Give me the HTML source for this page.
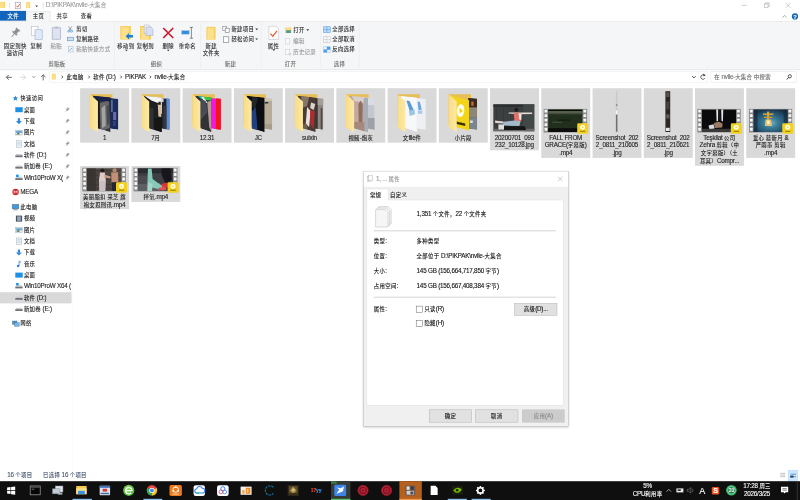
<!DOCTYPE html>
<html lang="zh-CN"><head><meta charset="utf-8"><title>nvile-大集合</title>
<style>
html,body{margin:0;padding:0;width:800px;height:500px;overflow:hidden;background:#fff}
#r{position:absolute;left:0;top:0;width:1600px;height:1000px;transform:scale(.5);transform-origin:0 0;overflow:hidden;background:#fff;font-family:"Liberation Sans","Noto Sans CJK SC",sans-serif}
#r div{position:absolute;box-sizing:border-box}
#w{left:-40px;top:-40px;width:1680px;height:1080px;background:#fff;filter:blur(0.6px)}
#c{left:40px;top:40px;width:1600px;height:1000px}
#r .t{white-space:pre;-webkit-text-stroke:0.22px}
#r .k{font-size:94%;letter-spacing:0.064em}
#r .l{font-size:110%;letter-spacing:-0.033em}
#r svg{position:absolute;left:0;top:0;overflow:visible}
</style></head><body><div id="r"><div id="w"><div id="c">
<svg width="1600" height="1000" viewBox="0 0 800 500">
<rect x="-20.00" y="-20.00" width="840.00" height="540.00" fill="#ffffff" />
<rect x="-1.00" y="1.90" width="6.00" height="6.00" fill="#f7d063" />
<polygon points="-0.28,2.50 3.80,2.50 3.80,7.90 -0.28,7.90" fill="#fce08c" />
<line x1="9.60" y1="2.50" x2="9.60" y2="8.50" stroke="#c8c8c8" stroke-width="0.5" />
<rect x="15.20" y="2.40" width="5.20" height="6.40" fill="#ffffff" stroke="#8a8a8a" stroke-width="0.5"/>
<path d="M16.4 5.8 L17.6 7.2 L19.6 4.2" fill="none" stroke="#d8572f" stroke-width="0.9" />
<rect x="26.20" y="2.20" width="4.00" height="5.80" fill="#f7d063" />
<polygon points="26.68,2.78 29.40,2.78 29.40,8.00 26.68,8.00" fill="#fce08c" />
<polygon points="35.30,5.60 38.10,5.60 36.70,7.20" fill="#444" />
<line x1="43.20" y1="2.50" x2="43.20" y2="8.50" stroke="#c8c8c8" stroke-width="0.5" />
<line x1="741.80" y1="5.40" x2="746.60" y2="5.40" stroke="#9a9a9a" stroke-width="0.5" />
<rect x="764.40" y="3.90" width="3.60" height="3.60" fill="none" stroke="#9a9a9a" stroke-width="0.5"/>
<path d="M765.6 3.9 V2.9 H769.2 V6.5 H768" fill="none" stroke="#9a9a9a" stroke-width="0.5" />
<path d="M785.8 3 L790.6 7.8 M790.6 3 L785.8 7.8" fill="none" stroke="#9a9a9a" stroke-width="0.5" />
<rect x="-10.00" y="10.90" width="36.00" height="9.80" fill="#1265bd" />
<rect x="-10.00" y="21.40" width="820.00" height="48.20" fill="#f5f6f7" />
<line x1="-10.00" y1="21.40" x2="810.00" y2="21.40" stroke="#dadbdc" stroke-width="0.5" />
<line x1="-10.00" y1="69.70" x2="810.00" y2="69.70" stroke="#dadbdc" stroke-width="0.6" />
<rect x="26.90" y="11.20" width="23.20" height="10.60" fill="#f5f6f7" stroke="#dadbdc" stroke-width="0.5"/>
<rect x="27.20" y="21.00" width="22.60" height="1.00" fill="#f5f6f7" />
<path d="M782.4 17.6 L784.6 15.4 L786.8 17.6" fill="none" stroke="#777" stroke-width="0.6" />
<circle cx="795.00" cy="16.40" r="3.10" fill="#1464b4" />
<line x1="114.30" y1="23.50" x2="114.30" y2="67.50" stroke="#e9eaec" stroke-width="0.6" />
<line x1="200.60" y1="23.50" x2="200.60" y2="67.50" stroke="#e9eaec" stroke-width="0.6" />
<line x1="261.30" y1="23.50" x2="261.30" y2="67.50" stroke="#e9eaec" stroke-width="0.6" />
<line x1="320.40" y1="23.50" x2="320.40" y2="67.50" stroke="#e9eaec" stroke-width="0.6" />
<line x1="359.20" y1="23.50" x2="359.20" y2="67.50" stroke="#e9eaec" stroke-width="0.6" />
<g transform="translate(15.20 32.80) scale(1.150) rotate(40)">
<rect x="-2.20" y="-4.20" width="4.40" height="1.20" fill="#8a8d91" />
<rect x="-1.50" y="-3.20" width="3.00" height="3.20" fill="#8a8d91" />
<polygon points="-3.00,0.00 3.00,0.00 2.20,1.20 -2.20,1.20" fill="#8a8d91" />
<rect x="-0.35" y="1.20" width="0.70" height="3.60" fill="#8a8d91" />
</g>
<rect x="31.60" y="26.60" width="6.40" height="9.00" fill="#fdfdfd" stroke="#a9b4c4" stroke-width="0.5"/>
<rect x="35.00" y="29.80" width="7.20" height="9.60" fill="#dfe9f7" stroke="#8fa5c4" stroke-width="0.5"/>
<rect x="52.20" y="27.80" width="8.40" height="11.40" fill="#dfe3ee" stroke="#9aa3b8" stroke-width="0.6"/>
<rect x="54.60" y="26.60" width="3.60" height="2.00" fill="#b9bfcc" />
<path d="M68.6 26.4 L71.2 30.4 M71.8 26.4 L69.2 30.4" fill="none" stroke="#5d6d85" stroke-width="0.6" />
<circle cx="68.80" cy="31.20" r="1.00" fill="none" stroke="#2b7fd0" stroke-width="0.6"/>
<circle cx="71.60" cy="31.20" r="1.00" fill="none" stroke="#2b7fd0" stroke-width="0.6"/>
<rect x="67.60" y="37.20" width="6.00" height="3.60" fill="#cfe0f4" stroke="#4b82c3" stroke-width="0.5"/>
<rect x="68.40" y="46.20" width="4.60" height="5.80" fill="#f4f7fb" stroke="#9fb0c9" stroke-width="0.5"/>
<path d="M69.6 50.6 L71.8 48.2" fill="none" stroke="#3f7fd0" stroke-width="0.7" />
<rect x="120.30" y="26.00" width="10.60" height="13.50" fill="#f7d063" />
<polygon points="121.57,27.35 128.78,27.35 128.78,39.50 121.57,39.50" fill="#fce08c" />
<polygon points="125.70,36.20 129.00,33.00 129.00,34.90 133.00,34.90 133.00,37.50 129.00,37.50 129.00,39.40" fill="#1b7fd0" />
<polygon points="125.00,49.70 127.80,49.70 126.40,51.30" fill="#333" />
<rect x="140.00" y="26.00" width="11.00" height="13.50" fill="#f7d063" />
<polygon points="141.32,27.35 148.80,27.35 148.80,39.50 141.32,39.50" fill="#fce08c" />
<path d="M144.3 25.0 H149.0 L151.0 27.0 V33.5 H144.3 Z" fill="#f4f5fb" stroke="#a3a8b6" stroke-width="0.45" />
<path d="M146.0 27.0 H150.8 L153.0 29.2 V35.5 H146.0 Z" fill="#d9dff3" stroke="#9aa0b2" stroke-width="0.45" />
<polygon points="144.20,49.70 147.00,49.70 145.60,51.30" fill="#333" />
<path d="M163.2 28 L173.2 38 M173.2 28 L163.2 38" fill="none" stroke="#cf1a2e" stroke-width="1.7" />
<polygon points="166.90,49.70 169.70,49.70 168.30,51.30" fill="#333" />
<rect x="181.60" y="30.60" width="7.60" height="3.60" fill="#2f8ee0" stroke="#b9c6d8" stroke-width="0.5"/>
<path d="M191.4 27.4 V38.2 M189.8 27.4 H193 M189.8 38.2 H193" fill="none" stroke="#444" stroke-width="0.6" />
<rect x="206.40" y="26.80" width="9.20" height="12.80" fill="#f7d063" />
<polygon points="207.50,28.08 213.76,28.08 213.76,39.60 207.50,39.60" fill="#fce08c" />
<rect x="222.80" y="26.40" width="3.60" height="4.00" fill="#fdfdfd" stroke="#6a7078" stroke-width="0.55"/>
<rect x="225.20" y="28.20" width="4.00" height="4.40" fill="#fdfdfd" stroke="#6a7078" stroke-width="0.55"/>
<polygon points="255.30,28.60 258.10,28.60 256.70,30.20" fill="#333" />
<rect x="223.40" y="36.80" width="5.40" height="5.60" fill="#fdfdfd" stroke="#6a7078" stroke-width="0.55"/>
<polygon points="255.30,38.40 258.10,38.40 256.70,40.00" fill="#333" />
<path d="M268.8 26.4 H276.2 L278.6 28.8 V39.5 H268.8 Z" fill="#fdfdfd" stroke="#bdbdbd" stroke-width="0.5" />
<path d="M270.4 33.6 L272.8 36.2 L277.0 30.8" fill="none" stroke="#d9603a" stroke-width="1.2" />
<polygon points="272.40,49.30 275.20,49.30 273.80,50.90" fill="#333" />
<rect x="285.20" y="27.60" width="6.00" height="5.40" fill="#f7d063" />
<polygon points="285.92,28.14 290.00,28.14 290.00,33.00 285.92,33.00" fill="#fce08c" />
<rect x="286.20" y="30.20" width="4.60" height="2.80" fill="#4a9a8a" />
<polygon points="306.30,29.30 309.10,29.30 307.70,30.90" fill="#333" />
<rect x="285.60" y="38.80" width="4.20" height="5.20" fill="#fafafa" stroke="#c2c6cc" stroke-width="0.45"/>
<rect x="285.60" y="49.60" width="4.20" height="5.20" fill="#fafafa" stroke="#c2c6cc" stroke-width="0.45"/>
<circle cx="289.80" cy="54.00" r="1.50" fill="#d4d6da" />
<rect x="323.60" y="26.80" width="6.60" height="5.60" fill="#bfdcf8" stroke="#3f93e6" stroke-width="0.5"/>
<line x1="326.90" y1="26.80" x2="326.90" y2="32.40" stroke="#3f93e6" stroke-width="0.5" />
<line x1="323.60" y1="29.60" x2="330.20" y2="29.60" stroke="#3f93e6" stroke-width="0.5" />
<rect x="323.60" y="36.80" width="6.60" height="5.60" fill="#f8f8f8" stroke="#b8bcc2" stroke-width="0.5"/>
<line x1="326.90" y1="36.80" x2="326.90" y2="42.40" stroke="#b8bcc2" stroke-width="0.5" />
<line x1="323.60" y1="39.60" x2="330.20" y2="39.60" stroke="#b8bcc2" stroke-width="0.5" />
<rect x="323.60" y="46.80" width="6.60" height="5.60" fill="#f2f7fc" stroke="#8fbfee" stroke-width="0.5"/>
<line x1="326.90" y1="46.80" x2="326.90" y2="52.40" stroke="#8fbfee" stroke-width="0.5" />
<line x1="323.60" y1="49.60" x2="330.20" y2="49.60" stroke="#8fbfee" stroke-width="0.5" />
<rect x="323.60" y="49.60" width="3.30" height="2.80" fill="#4a9ae6" />
<rect x="326.90" y="46.80" width="3.30" height="2.80" fill="#4a9ae6" />
<path d="M11.8 77.3 H6.4 M8.8 74.9 L6.4 77.3 L8.8 79.7" fill="none" stroke="#4a4a4a" stroke-width="0.85" />
<path d="M20.4 77.3 H25.6 M23.2 74.9 L25.6 77.3 L23.2 79.7" fill="none" stroke="#cfcfcf" stroke-width="0.8" />
<path d="M32.5 76.3 L33.8 77.6 L35.1 76.3" fill="none" stroke="#666" stroke-width="0.8" />
<path d="M43.2 80.4 V74.8 M40.9 77.1 L43.2 74.8 L45.5 77.1" fill="none" stroke="#4a4a4a" stroke-width="0.8" />
<rect x="49.80" y="71.60" width="657.60" height="10.60" fill="#ffffff" stroke="#e9e9e9" stroke-width="0.5"/>
<rect x="51.80" y="73.70" width="3.90" height="5.70" fill="#f7d063" />
<polygon points="52.27,74.27 54.92,74.27 54.92,79.40 52.27,79.40" fill="#fce08c" />
<path d="M61.50 75.6 L62.90 77 L61.50 78.4" fill="none" stroke="#444" stroke-width="0.85" />
<path d="M88.30 75.6 L89.70 77 L88.30 78.4" fill="none" stroke="#444" stroke-width="0.85" />
<path d="M120.30 75.6 L121.70 77 L120.30 78.4" fill="none" stroke="#444" stroke-width="0.85" />
<path d="M149.70 75.6 L151.10 77 L149.70 78.4" fill="none" stroke="#444" stroke-width="0.85" />
<path d="M692.2 76.2 L693.9 77.9 L695.6 76.2" fill="none" stroke="#333" stroke-width="0.95" />
<line x1="698.40" y1="71.60" x2="698.40" y2="82.20" stroke="#ececec" stroke-width="0.5" />
<path d="M704.4 75.3 A2.2 2.2 0 1 0 704.8 78.3" fill="none" stroke="#444" stroke-width="0.85" />
<polygon points="703.20,73.60 705.80,75.20 703.40,76.60" fill="#444" />
<rect x="710.80" y="71.60" width="85.40" height="10.60" fill="#ffffff" stroke="#e3e3e3" stroke-width="0.5"/>
<circle cx="789.80" cy="76.30" r="1.60" fill="none" stroke="#333" stroke-width="0.8"/>
<line x1="788.60" y1="77.50" x2="786.80" y2="79.50" stroke="#333" stroke-width="0.95" />
<rect x="-10.00" y="292.20" width="81.60" height="11.20" fill="#d9d9d9" />
<polygon points="15.40,95.40 16.16,97.35 18.25,97.47 16.64,98.80 17.16,100.83 15.40,99.70 13.64,100.83 14.16,98.80 12.55,97.47 14.64,97.35" fill="#2f8be0" />
<rect x="15.30" y="107.20" width="7.40" height="5.00" fill="#1e90e8" />
<g transform="translate(67.20 109.80) scale(0.550) rotate(40)">
<rect x="-2.20" y="-4.20" width="4.40" height="1.20" fill="#8a8d91" />
<rect x="-1.50" y="-3.20" width="3.00" height="3.20" fill="#8a8d91" />
<polygon points="-3.00,0.00 3.00,0.00 2.20,1.20 -2.20,1.20" fill="#8a8d91" />
<rect x="-0.35" y="1.20" width="0.70" height="3.60" fill="#8a8d91" />
</g>
<rect x="17.80" y="118.20" width="2.20" height="3.00" fill="#2f86d8" />
<polygon points="15.90,121.00 21.90,121.00 18.90,124.20" fill="#2f86d8" />
<g transform="translate(67.20 121.20) scale(0.550) rotate(40)">
<rect x="-2.20" y="-4.20" width="4.40" height="1.20" fill="#8a8d91" />
<rect x="-1.50" y="-3.20" width="3.00" height="3.20" fill="#8a8d91" />
<polygon points="-3.00,0.00 3.00,0.00 2.20,1.20 -2.20,1.20" fill="#8a8d91" />
<rect x="-0.35" y="1.20" width="0.70" height="3.60" fill="#8a8d91" />
</g>
<rect x="15.50" y="130.20" width="7.00" height="4.80" fill="#eef3f8" stroke="#9aa6b4" stroke-width="0.45"/>
<rect x="16.10" y="130.80" width="5.80" height="2.20" fill="#6aa9dc" />
<polygon points="16.10,134.40 18.30,132.20 20.10,134.40" fill="#5a7a4e" />
<g transform="translate(67.20 132.60) scale(0.550) rotate(40)">
<rect x="-2.20" y="-4.20" width="4.40" height="1.20" fill="#8a8d91" />
<rect x="-1.50" y="-3.20" width="3.00" height="3.20" fill="#8a8d91" />
<polygon points="-3.00,0.00 3.00,0.00 2.20,1.20 -2.20,1.20" fill="#8a8d91" />
<rect x="-0.35" y="1.20" width="0.70" height="3.60" fill="#8a8d91" />
</g>
<rect x="16.50" y="140.80" width="5.00" height="6.40" fill="#f7f9fb" stroke="#98a4b3" stroke-width="0.45"/>
<line x1="17.50" y1="142.40" x2="20.50" y2="142.40" stroke="#7fa6d0" stroke-width="0.45" />
<line x1="17.50" y1="143.80" x2="20.50" y2="143.80" stroke="#7fa6d0" stroke-width="0.45" />
<line x1="17.50" y1="145.20" x2="20.50" y2="145.20" stroke="#7fa6d0" stroke-width="0.45" />
<g transform="translate(67.20 144.00) scale(0.550) rotate(40)">
<rect x="-2.20" y="-4.20" width="4.40" height="1.20" fill="#8a8d91" />
<rect x="-1.50" y="-3.20" width="3.00" height="3.20" fill="#8a8d91" />
<polygon points="-3.00,0.00 3.00,0.00 2.20,1.20 -2.20,1.20" fill="#8a8d91" />
<rect x="-0.35" y="1.20" width="0.70" height="3.60" fill="#8a8d91" />
</g>
<polygon points="15.30,155.40 16.50,154.00 21.50,154.00 22.70,155.40" fill="#c9ccd0" />
<rect x="15.30" y="155.40" width="7.40" height="1.80" fill="#6e7378" />
<g transform="translate(67.20 155.20) scale(0.550) rotate(40)">
<rect x="-2.20" y="-4.20" width="4.40" height="1.20" fill="#8a8d91" />
<rect x="-1.50" y="-3.20" width="3.00" height="3.20" fill="#8a8d91" />
<polygon points="-3.00,0.00 3.00,0.00 2.20,1.20 -2.20,1.20" fill="#8a8d91" />
<rect x="-0.35" y="1.20" width="0.70" height="3.60" fill="#8a8d91" />
</g>
<polygon points="15.30,166.80 16.50,165.40 21.50,165.40 22.70,166.80" fill="#c9ccd0" />
<rect x="15.30" y="166.80" width="7.40" height="1.80" fill="#6e7378" />
<g transform="translate(67.20 166.60) scale(0.550) rotate(40)">
<rect x="-2.20" y="-4.20" width="4.40" height="1.20" fill="#8a8d91" />
<rect x="-1.50" y="-3.20" width="3.00" height="3.20" fill="#8a8d91" />
<polygon points="-3.00,0.00 3.00,0.00 2.20,1.20 -2.20,1.20" fill="#8a8d91" />
<rect x="-0.35" y="1.20" width="0.70" height="3.60" fill="#8a8d91" />
</g>
<polygon points="15.30,178.20 16.50,176.80 21.50,176.80 22.70,178.20" fill="#c9ccd0" />
<rect x="15.30" y="178.20" width="7.40" height="1.80" fill="#6e7378" />
<rect x="16.10" y="174.60" width="2.60" height="2.40" fill="#1e90e8" />
<g transform="translate(67.20 178.00) scale(0.550) rotate(40)">
<rect x="-2.20" y="-4.20" width="4.40" height="1.20" fill="#8a8d91" />
<rect x="-1.50" y="-3.20" width="3.00" height="3.20" fill="#8a8d91" />
<polygon points="-3.00,0.00 3.00,0.00 2.20,1.20 -2.20,1.20" fill="#8a8d91" />
<rect x="-0.35" y="1.20" width="0.70" height="3.60" fill="#8a8d91" />
</g>
<circle cx="15.60" cy="192.00" r="3.20" fill="#d9272e" />
<path d="M14.20 193.30 V190.80 L15.60 192.30 L17.00 190.80 V193.30" fill="none" stroke="#fff" stroke-width="0.7" />
<rect x="12.20" y="204.40" width="6.60" height="4.40" fill="#3a9be6" stroke="#5f6b78" stroke-width="0.5"/>
<rect x="13.40" y="209.40" width="4.20" height="0.80" fill="#5f6b78" />
<rect x="15.90" y="215.60" width="6.20" height="6.00" fill="#4a5058" />
<rect x="17.10" y="216.40" width="3.80" height="4.40" fill="#8fa7c0" />
<rect x="15.50" y="227.60" width="7.00" height="4.80" fill="#eef3f8" stroke="#9aa6b4" stroke-width="0.45"/>
<rect x="16.10" y="228.20" width="5.80" height="2.20" fill="#6aa9dc" />
<polygon points="16.10,231.80 18.30,229.60 20.10,231.80" fill="#5a7a4e" />
<rect x="16.50" y="238.00" width="5.00" height="6.40" fill="#f7f9fb" stroke="#98a4b3" stroke-width="0.45"/>
<line x1="17.50" y1="239.60" x2="20.50" y2="239.60" stroke="#7fa6d0" stroke-width="0.45" />
<line x1="17.50" y1="241.00" x2="20.50" y2="241.00" stroke="#7fa6d0" stroke-width="0.45" />
<line x1="17.50" y1="242.40" x2="20.50" y2="242.40" stroke="#7fa6d0" stroke-width="0.45" />
<rect x="17.80" y="249.60" width="2.20" height="3.00" fill="#2f86d8" />
<polygon points="15.90,252.40 21.90,252.40 18.90,255.60" fill="#2f86d8" />
<path d="M19.10 266.00 V261.00 L21.30 262.60" fill="none" stroke="#2f86d8" stroke-width="0.8" />
<circle cx="18.10" cy="266.00" r="1.30" fill="#2f86d8" />
<rect x="15.30" y="272.60" width="7.40" height="5.00" fill="#1e90e8" />
<polygon points="15.30,286.60 16.50,285.20 21.50,285.20 22.70,286.60" fill="#c9ccd0" />
<rect x="15.30" y="286.60" width="7.40" height="1.80" fill="#6e7378" />
<rect x="16.10" y="283.00" width="2.60" height="2.40" fill="#1e90e8" />
<polygon points="15.30,298.00 16.50,296.60 21.50,296.60 22.70,298.00" fill="#c9ccd0" />
<rect x="15.30" y="298.00" width="7.40" height="1.80" fill="#6e7378" />
<polygon points="15.30,309.20 16.50,307.80 21.50,307.80 22.70,309.20" fill="#c9ccd0" />
<rect x="15.30" y="309.20" width="7.40" height="1.80" fill="#6e7378" />
<rect x="12.40" y="321.00" width="4.60" height="3.40" fill="#3a9be6" stroke="#5f6b78" stroke-width="0.4"/>
<rect x="14.60" y="322.80" width="4.60" height="3.40" fill="#6fb6ee" stroke="#5f6b78" stroke-width="0.4"/>
<line x1="72.40" y1="84.00" x2="72.40" y2="470.00" stroke="#f4f4f4" stroke-width="0.5" />
<rect x="780.40" y="472.90" width="1.20" height="0.90" fill="#9a9a9a" />
<rect x="782.20" y="472.90" width="3.00" height="0.90" fill="#b9b9b9" />
<rect x="780.40" y="474.60" width="1.20" height="0.90" fill="#9a9a9a" />
<rect x="782.20" y="474.60" width="3.00" height="0.90" fill="#b9b9b9" />
<rect x="780.40" y="476.30" width="1.20" height="0.90" fill="#9a9a9a" />
<rect x="782.20" y="476.30" width="3.00" height="0.90" fill="#b9b9b9" />
<rect x="788.20" y="470.40" width="9.60" height="10.80" fill="#cce8ff" stroke="#a6d4fb" stroke-width="0.5"/>
<line x1="790.60" y1="474.20" x2="796.00" y2="474.20" stroke="#3f7fd4" stroke-width="0.8" />
<rect x="790.20" y="475.60" width="3.40" height="2.00" fill="#2c3d55" />
<line x1="793.60" y1="476.60" x2="796.00" y2="476.60" stroke="#5a7aa6" stroke-width="0.7" />
<filter id="bl" x="-20%" y="-20%" width="140%" height="140%"><feGaussianBlur stdDeviation="0.45"/></filter>
<filter id="bl2" x="-20%" y="-20%" width="140%" height="140%"><feGaussianBlur stdDeviation="0.7"/></filter>
<rect x="80.15" y="88.20" width="48.90" height="54.50" fill="#d9d9d9" />
<rect x="89.85" y="94.20" width="22.50" height="30.00" fill="#e8bf55" />
<clipPath id="c1"><polygon points="109.75,98.00 118.35,98.80 118.35,129.80 109.75,128.60"/></clipPath>
<g clip-path="url(#c1)">
<polygon points="109.75,98.00 118.35,98.80 118.35,129.80 109.75,128.60" fill="#182c60" />
<g filter="url(#bl)">
<rect x="113.15" y="112.00" width="3.00" height="8.00" fill="#7068a4" />
<rect x="111.55" y="100.00" width="0.80" height="12.00" fill="#a9b8dc" />
<rect x="113.15" y="121.00" width="2.40" height="5.00" fill="#3f3f78" />
</g>
</g>
<clipPath id="c2"><polygon points="92.75,95.70 110.55,97.60 110.55,132.20 97.75,128.20"/></clipPath>
<g clip-path="url(#c2)">
<polygon points="92.75,95.70 110.55,97.60 110.55,132.20 97.75,128.20" fill="#33353b" />
<g filter="url(#bl)">
<polygon points="99.75,103.00 108.75,100.60 109.75,128.00 100.55,131.00" fill="#67686b" />
<polygon points="101.55,108.00 105.15,105.00 105.75,126.00 102.15,128.00" fill="#a3a3a4" />
<polygon points="106.55,106.00 108.75,105.00 109.15,124.00 107.15,125.00" fill="#4a4a4e" />
<rect x="96.15" y="96.00" width="3.60" height="37.00" fill="#1a1b1f" />
<polygon points="92.15,95.00 111.15,96.60 111.15,101.40 98.15,100.40" fill="#14224a" />
</g>
</g>
<linearGradient id="fg2" x1="0" x2="1" y1="0" y2="0"><stop offset="0" stop-color="#f8dc86"/><stop offset="1" stop-color="#fde9a6"/></linearGradient>
<polygon points="89.95,94.20 97.95,101.40 97.95,132.00 89.85,127.60" fill="url(#fg2)" />
<rect x="131.39" y="88.20" width="48.90" height="54.50" fill="#d9d9d9" />
<rect x="141.09" y="94.20" width="22.50" height="30.00" fill="#e8bf55" />
<clipPath id="c3"><polygon points="160.99,98.00 169.59,98.80 169.59,129.80 160.99,128.60"/></clipPath>
<g clip-path="url(#c3)">
<polygon points="160.99,98.00 169.59,98.80 169.59,129.80 160.99,128.60" fill="#23262d" />
<g filter="url(#bl)">
<rect x="166.39" y="97.00" width="3.40" height="34.00" fill="#5b8dd6" />
<rect x="160.99" y="97.00" width="2.60" height="5.00" fill="#cfd3d8" />
<rect x="163.39" y="106.00" width="3.00" height="25.00" fill="#34373f" />
</g>
</g>
<clipPath id="c4"><polygon points="143.99,95.70 161.79,97.60 161.79,132.20 148.99,128.20"/></clipPath>
<g clip-path="url(#c4)">
<polygon points="143.99,95.70 161.79,97.60 161.79,132.20 148.99,128.20" fill="#1e1f23" />
<g filter="url(#bl)">
<polygon points="143.39,95.00 162.39,96.50 162.39,114.00 160.19,113.60 159.19,103.40 151.39,100.60" fill="#f4f4f4" />
<polygon points="157.79,104.50 160.79,104.00 161.39,117.00 158.39,116.60" fill="#d9bfa4" />
<rect x="158.39" y="101.80" width="2.40" height="3.00" fill="#2a1c18" />
<rect x="149.39" y="108.00" width="4.00" height="24.00" fill="#2f3034" />
<rect x="154.39" y="118.00" width="7.40" height="14.00" fill="#141416" />
</g>
</g>
<linearGradient id="fg4" x1="0" x2="1" y1="0" y2="0"><stop offset="0" stop-color="#f8dc86"/><stop offset="1" stop-color="#fde9a6"/></linearGradient>
<polygon points="141.19,94.20 149.19,101.40 149.19,132.00 141.09,127.60" fill="url(#fg4)" />
<rect x="182.63" y="88.20" width="48.90" height="54.50" fill="#d9d9d9" />
<rect x="192.33" y="94.20" width="22.50" height="30.00" fill="#e8bf55" />
<clipPath id="c5"><polygon points="210.63,98.00 220.83,98.80 220.83,129.80 210.63,128.60"/></clipPath>
<g clip-path="url(#c5)">
<polygon points="210.63,98.00 220.83,98.80 220.83,129.80 210.63,128.60" fill="#f018e0" />
<g filter="url(#bl)">
<rect x="215.93" y="97.00" width="6.00" height="35.00" fill="#f1121f" />
</g>
</g>
<clipPath id="c6"><polygon points="195.23,95.70 211.43,97.60 211.43,132.20 200.23,128.20"/></clipPath>
<g clip-path="url(#c6)">
<polygon points="195.23,95.70 211.43,97.60 211.43,132.20 200.23,128.20" fill="#303236" />
<g filter="url(#bl)">
<polygon points="197.63,95.00 203.03,96.00 205.13,100.00 200.63,98.50" fill="#19c4c0" />
<polygon points="203.03,96.00 211.63,97.00 211.63,100.40 205.13,100.00" fill="#35c83c" />
<polygon points="201.23,96.60 203.63,97.00 207.63,103.00 204.63,102.40" fill="#e8eef0" />
<polygon points="207.23,102.00 211.23,100.40 211.63,132.00 209.23,127.00" fill="#b59c8e" />
<polygon points="200.63,99.00 205.63,101.00 207.63,112.00 200.63,120.00" fill="#464e56" />
</g>
</g>
<linearGradient id="fg6" x1="0" x2="1" y1="0" y2="0"><stop offset="0" stop-color="#f8dc86"/><stop offset="1" stop-color="#fde9a6"/></linearGradient>
<polygon points="192.43,94.20 200.43,101.40 200.43,132.00 192.33,127.60" fill="url(#fg6)" />
<rect x="233.87" y="88.20" width="48.90" height="54.50" fill="#d9d9d9" />
<rect x="243.57" y="94.20" width="22.50" height="30.00" fill="#e8bf55" />
<clipPath id="c7"><polygon points="263.87,98.00 272.07,98.80 272.07,129.80 263.87,128.60"/></clipPath>
<g clip-path="url(#c7)">
<polygon points="263.87,98.00 272.07,98.80 272.07,129.80 263.87,128.60" fill="#b7ac97" />
<g filter="url(#bl)">
<rect x="264.67" y="102.00" width="3.60" height="1.50" fill="#2f3a34" />
<rect x="263.87" y="98.00" width="9.00" height="3.00" fill="#cdc4b2" />
<rect x="263.87" y="124.00" width="9.00" height="6.00" fill="#a89d88" />
</g>
</g>
<clipPath id="c8"><polygon points="246.47,95.70 264.67,97.60 264.67,132.20 251.47,128.20"/></clipPath>
<g clip-path="url(#c8)">
<polygon points="246.47,95.70 264.67,97.60 264.67,132.20 251.47,128.20" fill="#0d0e13" />
<g filter="url(#bl)">
<polygon points="251.87,112.00 255.47,106.00 257.47,129.00 251.87,132.00" fill="#23407f" />
<polygon points="251.87,97.00 257.87,98.00 255.87,106.00 251.87,108.00" fill="#24262c" />
</g>
</g>
<linearGradient id="fg8" x1="0" x2="1" y1="0" y2="0"><stop offset="0" stop-color="#f8dc86"/><stop offset="1" stop-color="#fde9a6"/></linearGradient>
<polygon points="243.67,94.20 251.67,101.40 251.67,132.00 243.57,127.60" fill="url(#fg8)" />
<rect x="285.11" y="88.20" width="48.90" height="54.50" fill="#d9d9d9" />
<rect x="294.81" y="94.20" width="22.50" height="30.00" fill="#e8bf55" />
<clipPath id="c9"><polygon points="314.91,98.00 323.31,98.80 323.31,129.80 314.91,128.60"/></clipPath>
<g clip-path="url(#c9)">
<polygon points="314.91,98.00 323.31,98.80 323.31,129.80 314.91,128.60" fill="#8e8781" />
<g filter="url(#bl)">
<rect x="314.91" y="97.00" width="2.80" height="35.00" fill="#3a3030" />
<rect x="320.71" y="108.00" width="1.60" height="22.00" fill="#4e4644" />
<rect x="317.71" y="97.00" width="6.00" height="8.00" fill="#a59e98" />
</g>
</g>
<clipPath id="c10"><polygon points="297.71,95.70 315.71,97.60 315.71,132.20 302.71,128.20"/></clipPath>
<g clip-path="url(#c10)">
<polygon points="297.71,95.70 315.71,97.60 315.71,132.20 302.71,128.20" fill="#4a3b35" />
<g filter="url(#bl)">
<polygon points="301.11,96.00 309.11,97.00 307.11,106.00 302.11,108.00" fill="#85766a" />
<polygon points="307.11,107.00 310.71,111.00 309.11,127.00 305.71,124.00" fill="#e6e1dc" />
<polygon points="310.11,110.00 314.71,111.40 313.51,129.00 310.31,124.00" fill="#b02c30" />
<polygon points="311.11,102.40 315.31,104.00 313.71,110.00 310.11,108.00" fill="#dcd2ca" />
<rect x="303.11" y="124.00" width="4.00" height="9.00" fill="#6f5f52" />
</g>
</g>
<linearGradient id="fg10" x1="0" x2="1" y1="0" y2="0"><stop offset="0" stop-color="#f8dc86"/><stop offset="1" stop-color="#fde9a6"/></linearGradient>
<polygon points="294.91,94.20 302.91,101.40 302.91,132.00 294.81,127.60" fill="url(#fg10)" />
<rect x="336.35" y="88.20" width="48.90" height="54.50" fill="#d9d9d9" />
<rect x="346.05" y="94.20" width="22.50" height="30.00" fill="#e8bf55" />
<clipPath id="c11"><polygon points="367.05,98.00 374.55,98.80 374.55,129.80 367.05,128.60"/></clipPath>
<g clip-path="url(#c11)">
<polygon points="367.05,98.00 374.55,98.80 374.55,129.80 367.05,128.60" fill="#c3c8d0" />
<g filter="url(#bl)">
<rect x="366.35" y="118.00" width="9.00" height="14.00" fill="#9da2aa" />
<rect x="366.35" y="97.00" width="9.00" height="8.00" fill="#d9dde3" />
</g>
</g>
<clipPath id="c12"><polygon points="348.95,95.70 367.85,97.60 367.85,132.20 353.95,128.20"/></clipPath>
<g clip-path="url(#c12)">
<polygon points="348.95,95.70 367.85,97.60 367.85,132.20 353.95,128.20" fill="#c4a79e" />
<g filter="url(#bl)">
<polygon points="351.35,95.00 368.35,96.80 368.35,103.00 354.35,101.00" fill="#d9cfcc" />
<polygon points="358.35,104.00 360.75,100.60 362.75,105.00 362.35,122.00 358.75,122.00" fill="#8f6f60" />
<rect x="363.75" y="98.00" width="5.00" height="34.00" fill="#a9adb6" />
<rect x="353.35" y="122.00" width="11.00" height="11.00" fill="#a58a7c" />
</g>
</g>
<linearGradient id="fg12" x1="0" x2="1" y1="0" y2="0"><stop offset="0" stop-color="#f8dc86"/><stop offset="1" stop-color="#fde9a6"/></linearGradient>
<polygon points="346.15,94.20 354.15,101.40 354.15,132.00 346.05,127.60" fill="url(#fg12)" />
<rect x="387.59" y="88.20" width="48.90" height="54.50" fill="#d9d9d9" />
<rect x="397.29" y="94.20" width="22.50" height="30.00" fill="#e8bf55" />
<clipPath id="c13"><polygon points="416.59,98.00 425.79,98.80 425.79,129.80 416.59,128.60"/></clipPath>
<g clip-path="url(#c13)">
<polygon points="416.59,98.00 425.79,98.80 425.79,129.80 416.59,128.60" fill="#eef0f4" />
<g filter="url(#bl)">
<polygon points="417.39,101.40 419.79,101.80 421.79,109.60 418.59,110.40" fill="#6ea6dc" />
<rect x="417.99" y="110.60" width="4.40" height="3.20" fill="#a9cbe9" />
</g>
</g>
<clipPath id="c14"><polygon points="400.19,95.70 417.39,97.60 417.39,132.20 405.19,128.20"/></clipPath>
<g clip-path="url(#c14)">
<polygon points="400.19,95.70 417.39,97.60 417.39,132.20 405.19,128.20" fill="#f6f8fa" />
<g filter="url(#bl)">
<polygon points="406.39,100.60 409.59,101.00 414.19,111.00 409.99,112.00" fill="#5b9bd5" />
<polygon points="408.99,110.40 414.59,109.40 414.99,114.40 409.59,116.00" fill="#9ec4e4" />
<line x1="417.19" y1="96.00" x2="417.19" y2="133.00" stroke="#d9dce2" stroke-width="0.5" />
</g>
</g>
<linearGradient id="fg14" x1="0" x2="1" y1="0" y2="0"><stop offset="0" stop-color="#f8dc86"/><stop offset="1" stop-color="#fde9a6"/></linearGradient>
<polygon points="397.39,94.20 405.39,101.40 405.39,132.00 397.29,127.60" fill="url(#fg14)" />
<rect x="438.83" y="88.20" width="48.90" height="54.50" fill="#d9d9d9" />
<rect x="448.53" y="94.20" width="22.50" height="30.00" fill="#e8bf55" />
<clipPath id="c15"><polygon points="468.33,98.00 477.03,98.80 477.03,129.80 468.33,128.60"/></clipPath>
<g clip-path="url(#c15)">
<polygon points="468.33,98.00 477.03,98.80 477.03,129.80 468.33,128.60" fill="#6d5240" />
<g filter="url(#bl)">
<rect x="467.83" y="97.00" width="10.00" height="10.50" fill="#3a2a22" />
<rect x="471.23" y="101.60" width="2.40" height="4.20" fill="#c8682a" />
<rect x="467.83" y="107.50" width="10.00" height="10.00" fill="#8c8678" />
<rect x="467.83" y="117.50" width="10.00" height="12.00" fill="#7c8490" />
<rect x="469.83" y="120.40" width="3.00" height="2.60" fill="#d8d8d8" />
</g>
</g>
<clipPath id="c16"><polygon points="451.43,95.40 469.13,100.20 469.13,130.40 456.43,127.40"/></clipPath>
<g clip-path="url(#c16)">
<polygon points="451.43,95.40 469.13,100.20 469.13,130.40 456.43,127.40" fill="#f2d418" />
<g filter="url(#bl)">
<ellipse cx="460.63" cy="110.60" rx="3.7" ry="6.4" fill="#fffdf0" transform="rotate(4 460.63 110.60)"/>
<polygon points="459.43,107.40 462.83,111.00 459.63,113.60" fill="#f3d400" />
<polygon points="456.43,121.40 465.23,123.40 465.23,126.00 456.43,124.00" fill="#3b3200" />
</g>
</g>
<linearGradient id="fg16" x1="0" x2="1" y1="0" y2="0"><stop offset="0" stop-color="#f8dc86"/><stop offset="1" stop-color="#fde9a6"/></linearGradient>
<polygon points="448.63,94.20 456.63,101.40 456.63,132.00 448.53,127.60" fill="url(#fg16)" />
<rect x="490.07" y="88.20" width="48.90" height="62.10" fill="#d9d9d9" />
<clipPath id="c17"><polygon points="493.20,104.20 534.50,104.20 534.50,131.40 493.20,131.40"/></clipPath>
<g clip-path="url(#c17)">
<rect x="493.20" y="104.20" width="41.30" height="27.20" fill="#3b3f3f" />
<g filter="url(#bl)">
<rect x="493.20" y="104.20" width="41.30" height="2.60" fill="#2a2d2d" />
<rect x="496.20" y="104.20" width="0.60" height="22.00" fill="#2f3333" />
<rect x="503.20" y="104.20" width="0.60" height="22.00" fill="#2f3333" />
<rect x="510.20" y="104.20" width="0.60" height="22.00" fill="#2f3333" />
<rect x="517.20" y="104.20" width="0.60" height="22.00" fill="#2f3333" />
<rect x="524.20" y="104.20" width="0.60" height="22.00" fill="#2f3333" />
<rect x="531.20" y="104.20" width="0.60" height="22.00" fill="#2f3333" />
<rect x="523.20" y="104.20" width="11.30" height="27.20" fill="#434747" />
<rect x="493.20" y="128.80" width="41.30" height="2.60" fill="#6b6b6a" />
<polygon points="508.60,112.40 520.00,112.60 532.00,112.60 532.40,114.00 520.00,114.20 508.60,113.60" fill="#e6dcd6" />
<circle cx="516.40" cy="109.80" r="2.10" fill="#231e1d" />
<polygon points="513.80,112.80 521.40,113.00 521.20,121.20 514.40,121.20" fill="#e2706a" />
<polygon points="518.60,113.20 521.60,113.40 521.20,120.00 519.20,119.40" fill="#f0e6e2" />
<polygon points="514.40,120.60 520.60,121.00 519.40,126.00 503.40,125.60 503.20,121.80" fill="#a3b8c8" />
<polygon points="495.00,120.40 503.40,121.40 503.40,123.60 495.20,123.00" fill="#e3d3d0" />
<rect x="498.40" y="124.40" width="5.60" height="5.00" fill="#dfdedb" />
<polygon points="504.00,126.20 525.00,126.20 526.00,130.00 504.00,130.00" fill="#141415" />
</g>
</g>
<rect x="541.31" y="88.20" width="48.90" height="69.70" fill="#d9d9d9" />
<rect x="543.60" y="108.90" width="43.50" height="23.60" fill="#8b8b8b" />
<rect x="544.55" y="109.65" width="2.7" height="2.9" rx="0.5" fill="#f6f6f6"/>
<rect x="583.45" y="109.65" width="2.7" height="2.9" rx="0.5" fill="#f6f6f6"/>
<rect x="544.55" y="114.17" width="2.7" height="2.9" rx="0.5" fill="#f6f6f6"/>
<rect x="583.45" y="114.17" width="2.7" height="2.9" rx="0.5" fill="#f6f6f6"/>
<rect x="544.55" y="118.69" width="2.7" height="2.9" rx="0.5" fill="#f6f6f6"/>
<rect x="583.45" y="118.69" width="2.7" height="2.9" rx="0.5" fill="#f6f6f6"/>
<rect x="544.55" y="123.21" width="2.7" height="2.9" rx="0.5" fill="#f6f6f6"/>
<rect x="583.45" y="123.21" width="2.7" height="2.9" rx="0.5" fill="#f6f6f6"/>
<rect x="544.55" y="127.73" width="2.7" height="2.9" rx="0.5" fill="#f6f6f6"/>
<rect x="583.45" y="127.73" width="2.7" height="2.9" rx="0.5" fill="#f6f6f6"/>
<clipPath id="c18"><polygon points="548.10,109.40 582.60,109.40 582.60,132.00 548.10,132.00"/></clipPath>
<g clip-path="url(#c18)">
<rect x="548.10" y="109.40" width="34.50" height="22.60" fill="#232f1d" />
<g filter="url(#bl)">
<rect x="548.10" y="109.40" width="34.50" height="1.60" fill="#060806" />
<rect x="548.10" y="111.00" width="34.50" height="2.80" fill="#565f4c" />
<rect x="548.10" y="113.80" width="34.50" height="1.60" fill="#2c3526" />
<rect x="548.10" y="128.40" width="34.50" height="3.60" fill="#070907" />
<rect x="552.10" y="121.80" width="10.00" height="0.90" fill="#46553f" />
<rect x="558.10" y="119.80" width="12.00" height="0.80" fill="#0d120c" />
</g>
</g>
<rect x="577.20" y="123.30" width="11" height="10.5" rx="1.4" fill="#f2d21e"/>
<circle cx="582.60" cy="127.30" r="2.50" fill="#fffbe0" />
<polygon points="582.00,126.30 583.80,127.30 582.00,128.30" fill="#f2c81e" />
<rect x="580.10" y="130.80" width="5.20" height="1.00" fill="#8a7a18" />
<rect x="592.55" y="88.20" width="48.90" height="69.70" fill="#d9d9d9" />
<rect x="615.90" y="91.20" width="1.50" height="40.60" fill="#c9c9c9" />
<rect x="615.90" y="114.60" width="1.50" height="17.20" fill="#6f7072" />
<rect x="615.90" y="110.40" width="1.50" height="3.80" fill="#f6f6f6" />
<rect x="615.90" y="104.40" width="1.50" height="1.40" fill="#77787a" />
<rect x="643.79" y="88.20" width="48.90" height="69.70" fill="#d9d9d9" />
<rect x="665.40" y="91.20" width="4.80" height="40.80" fill="#2b2724" />
<rect x="666.20" y="92.40" width="3.20" height="4.60" fill="#5a544e" />
<rect x="666.20" y="101.40" width="3.20" height="8.00" fill="#4a423a" />
<rect x="666.20" y="114.40" width="3.20" height="4.00" fill="#6a5a4c" />
<rect x="665.90" y="127.80" width="3.80" height="3.20" fill="#e8e6e2" />
<rect x="695.03" y="88.20" width="48.90" height="77.60" fill="#d9d9d9" />
<rect x="697.30" y="108.90" width="43.40" height="23.60" fill="#8b8b8b" />
<rect x="698.25" y="109.65" width="2.7" height="2.9" rx="0.5" fill="#f6f6f6"/>
<rect x="737.05" y="109.65" width="2.7" height="2.9" rx="0.5" fill="#f6f6f6"/>
<rect x="698.25" y="114.17" width="2.7" height="2.9" rx="0.5" fill="#f6f6f6"/>
<rect x="737.05" y="114.17" width="2.7" height="2.9" rx="0.5" fill="#f6f6f6"/>
<rect x="698.25" y="118.69" width="2.7" height="2.9" rx="0.5" fill="#f6f6f6"/>
<rect x="737.05" y="118.69" width="2.7" height="2.9" rx="0.5" fill="#f6f6f6"/>
<rect x="698.25" y="123.21" width="2.7" height="2.9" rx="0.5" fill="#f6f6f6"/>
<rect x="737.05" y="123.21" width="2.7" height="2.9" rx="0.5" fill="#f6f6f6"/>
<rect x="698.25" y="127.73" width="2.7" height="2.9" rx="0.5" fill="#f6f6f6"/>
<rect x="737.05" y="127.73" width="2.7" height="2.9" rx="0.5" fill="#f6f6f6"/>
<clipPath id="c19"><polygon points="701.80,109.40 736.20,109.40 736.20,132.00 701.80,132.00"/></clipPath>
<g clip-path="url(#c19)">
<rect x="701.80" y="109.40" width="34.40" height="22.60" fill="#0a0a0c" />
<g filter="url(#bl)">
<polygon points="716.20,109.00 718.20,109.00 718.00,121.00 716.60,121.40" fill="#e6e6ea" />
<polygon points="721.20,109.00 723.30,109.00 722.90,121.40 721.50,121.00" fill="#e6e6ea" />
<rect x="718.60" y="109.00" width="2.20" height="11.00" fill="#15151a" />
<polygon points="713.80,123.00 719.00,121.80 722.60,123.40 722.20,127.60 715.00,128.00" fill="#9c7a64" />
<polygon points="708.60,125.60 713.60,124.20 714.60,128.40 709.40,129.40" fill="#d9dade" />
<rect x="701.80" y="128.80" width="34.40" height="3.20" fill="#3b3938" />
</g>
</g>
<rect x="730.80" y="123.30" width="11" height="10.5" rx="1.4" fill="#f2d21e"/>
<circle cx="736.20" cy="127.30" r="2.50" fill="#fffbe0" />
<polygon points="735.60,126.30 737.40,127.30 735.60,128.30" fill="#f2c81e" />
<rect x="733.70" y="130.80" width="5.20" height="1.00" fill="#8a7a18" />
<rect x="746.27" y="88.20" width="48.90" height="69.70" fill="#d9d9d9" />
<rect x="749.00" y="108.90" width="43.20" height="23.60" fill="#8b8b8b" />
<rect x="749.95" y="109.65" width="2.7" height="2.9" rx="0.5" fill="#f6f6f6"/>
<rect x="788.55" y="109.65" width="2.7" height="2.9" rx="0.5" fill="#f6f6f6"/>
<rect x="749.95" y="114.17" width="2.7" height="2.9" rx="0.5" fill="#f6f6f6"/>
<rect x="788.55" y="114.17" width="2.7" height="2.9" rx="0.5" fill="#f6f6f6"/>
<rect x="749.95" y="118.69" width="2.7" height="2.9" rx="0.5" fill="#f6f6f6"/>
<rect x="788.55" y="118.69" width="2.7" height="2.9" rx="0.5" fill="#f6f6f6"/>
<rect x="749.95" y="123.21" width="2.7" height="2.9" rx="0.5" fill="#f6f6f6"/>
<rect x="788.55" y="123.21" width="2.7" height="2.9" rx="0.5" fill="#f6f6f6"/>
<rect x="749.95" y="127.73" width="2.7" height="2.9" rx="0.5" fill="#f6f6f6"/>
<rect x="788.55" y="127.73" width="2.7" height="2.9" rx="0.5" fill="#f6f6f6"/>
<clipPath id="c20"><polygon points="753.50,109.40 787.70,109.40 787.70,132.00 753.50,132.00"/></clipPath>
<g clip-path="url(#c20)">
<rect x="753.50" y="109.40" width="34.20" height="22.60" fill="#17303f" />
<g filter="url(#bl)">
<radialGradient id="rg14" cx="0.5" cy="0.6" r="0.62"><stop offset="0" stop-color="#7ab4c4"/><stop offset="0.35" stop-color="#387a96"/><stop offset="0.75" stop-color="#24506c"/><stop offset="1" stop-color="#183246"/></radialGradient>
<rect x="753.50" y="109.40" width="34.20" height="22.60" fill="url(#rg14)" />
<rect x="763.00" y="113.40" width="10.40" height="1.50" fill="#d9a63a" />
<rect x="767.00" y="111.60" width="2.20" height="8.00" fill="#d9a63a" />
<rect x="764.00" y="116.60" width="8.40" height="1.40" fill="#c99632" />
<polygon points="765.60,119.60 771.00,119.60 772.00,126.00 764.80,126.00" fill="#e2c26c" />
<rect x="767.00" y="120.60" width="2.60" height="3.60" fill="#f6efcf" />
<rect x="753.50" y="109.40" width="4.00" height="22.60" fill="#14283a" opacity="0.6"/>
<rect x="783.70" y="109.40" width="4.00" height="22.60" fill="#14283a" opacity="0.6"/>
</g>
</g>
<rect x="782.30" y="123.30" width="11" height="10.5" rx="1.4" fill="#f2d21e"/>
<circle cx="787.70" cy="127.30" r="2.50" fill="#fffbe0" />
<polygon points="787.10,126.30 788.90,127.30 787.10,128.30" fill="#f2c81e" />
<rect x="785.20" y="130.80" width="5.20" height="1.00" fill="#8a7a18" />
<rect x="80.15" y="166.10" width="48.90" height="43.00" fill="#d9d9d9" />
<rect x="82.30" y="167.80" width="43.60" height="23.60" fill="#8b8b8b" />
<rect x="83.25" y="168.55" width="2.7" height="2.9" rx="0.5" fill="#f6f6f6"/>
<rect x="122.25" y="168.55" width="2.7" height="2.9" rx="0.5" fill="#f6f6f6"/>
<rect x="83.25" y="173.07" width="2.7" height="2.9" rx="0.5" fill="#f6f6f6"/>
<rect x="122.25" y="173.07" width="2.7" height="2.9" rx="0.5" fill="#f6f6f6"/>
<rect x="83.25" y="177.59" width="2.7" height="2.9" rx="0.5" fill="#f6f6f6"/>
<rect x="122.25" y="177.59" width="2.7" height="2.9" rx="0.5" fill="#f6f6f6"/>
<rect x="83.25" y="182.11" width="2.7" height="2.9" rx="0.5" fill="#f6f6f6"/>
<rect x="122.25" y="182.11" width="2.7" height="2.9" rx="0.5" fill="#f6f6f6"/>
<rect x="83.25" y="186.63" width="2.7" height="2.9" rx="0.5" fill="#f6f6f6"/>
<rect x="122.25" y="186.63" width="2.7" height="2.9" rx="0.5" fill="#f6f6f6"/>
<clipPath id="c21"><polygon points="86.80,168.30 121.40,168.30 121.40,190.90 86.80,190.90"/></clipPath>
<g clip-path="url(#c21)">
<rect x="86.80" y="168.30" width="34.60" height="22.60" fill="#4b433d" />
<g filter="url(#bl)">
<rect x="86.80" y="168.30" width="9.00" height="22.60" fill="#3a3531" />
<rect x="110.80" y="168.30" width="10.60" height="22.60" fill="#544a42" />
<rect x="86.80" y="170.30" width="34.60" height="0.50" fill="#3a332e" />
<rect x="86.80" y="174.90" width="34.60" height="0.50" fill="#3a332e" />
<rect x="86.80" y="179.50" width="34.60" height="0.50" fill="#3a332e" />
<rect x="86.80" y="184.10" width="34.60" height="0.50" fill="#3a332e" />
<rect x="86.80" y="188.70" width="34.60" height="0.50" fill="#3a332e" />
<circle cx="102.40" cy="170.60" r="2.00" fill="#241c1a" />
<polygon points="100.00,172.40 104.80,172.40 105.80,180.00 105.20,191.60 99.40,191.60 99.00,180.00" fill="#dccbc6" />
<polygon points="99.60,181.00 105.40,181.00 105.20,191.60 99.40,191.60" fill="#c8c0c2" />
<polygon points="104.40,174.40 110.60,176.40 110.20,178.60 104.60,177.60" fill="#c99a82" />
<circle cx="114.60" cy="170.20" r="2.10" fill="#b28670" />
<polygon points="111.20,172.40 118.00,172.20 118.40,182.40 111.60,182.60" fill="#c08f74" />
<polygon points="111.80,182.20 117.60,182.20 117.40,191.60 112.20,191.60" fill="#23263a" />
</g>
</g>
<rect x="116.00" y="182.20" width="11" height="10.5" rx="1.4" fill="#f2d21e"/>
<circle cx="121.40" cy="186.20" r="2.50" fill="#fffbe0" />
<polygon points="120.80,185.20 122.60,186.20 120.80,187.20" fill="#f2c81e" />
<rect x="118.90" y="189.70" width="5.20" height="1.00" fill="#8a7a18" />
<rect x="131.39" y="166.10" width="48.90" height="35.80" fill="#d9d9d9" />
<rect x="133.50" y="167.80" width="44.00" height="23.60" fill="#8b8b8b" />
<rect x="134.45" y="168.55" width="2.7" height="2.9" rx="0.5" fill="#f6f6f6"/>
<rect x="173.85" y="168.55" width="2.7" height="2.9" rx="0.5" fill="#f6f6f6"/>
<rect x="134.45" y="173.07" width="2.7" height="2.9" rx="0.5" fill="#f6f6f6"/>
<rect x="173.85" y="173.07" width="2.7" height="2.9" rx="0.5" fill="#f6f6f6"/>
<rect x="134.45" y="177.59" width="2.7" height="2.9" rx="0.5" fill="#f6f6f6"/>
<rect x="173.85" y="177.59" width="2.7" height="2.9" rx="0.5" fill="#f6f6f6"/>
<rect x="134.45" y="182.11" width="2.7" height="2.9" rx="0.5" fill="#f6f6f6"/>
<rect x="173.85" y="182.11" width="2.7" height="2.9" rx="0.5" fill="#f6f6f6"/>
<rect x="134.45" y="186.63" width="2.7" height="2.9" rx="0.5" fill="#f6f6f6"/>
<rect x="173.85" y="186.63" width="2.7" height="2.9" rx="0.5" fill="#f6f6f6"/>
<clipPath id="c22"><polygon points="138.00,168.30 173.00,168.30 173.00,190.90 138.00,190.90"/></clipPath>
<g clip-path="url(#c22)">
<rect x="138.00" y="168.30" width="35.00" height="22.60" fill="#3d3f44" />
<g filter="url(#bl)">
<rect x="138.00" y="168.30" width="35.00" height="5.00" fill="#2b2c30" />
<rect x="138.00" y="183.00" width="22.00" height="9.00" fill="#5c5f64" />
<rect x="138.00" y="176.00" width="9.00" height="8.00" fill="#4a4c50" />
<polygon points="161.40,168.00 170.40,168.00 171.80,180.00 166.00,184.00 161.80,176.00" fill="#17181c" />
<polygon points="148.00,168.60 151.60,168.40 152.60,179.00 158.00,183.00 165.00,187.60 163.60,190.40 152.00,187.60 147.40,182.00" fill="#84c8b8" />
<polygon points="147.60,182.00 152.60,184.00 152.00,191.60 147.20,191.60" fill="#a6d6ca" />
<polygon points="161.40,184.00 167.40,182.60 168.40,186.60 163.00,189.40" fill="#d8343a" />
<polygon points="158.60,187.80 166.00,187.00 166.40,190.00 158.80,190.60" fill="#e2504f" />
</g>
</g>
<rect x="167.60" y="182.20" width="11" height="10.5" rx="1.4" fill="#f2d21e"/>
<circle cx="173.00" cy="186.20" r="2.50" fill="#fffbe0" />
<polygon points="172.40,185.20 174.20,186.20 172.40,187.20" fill="#f2c81e" />
<rect x="170.50" y="189.70" width="5.20" height="1.00" fill="#8a7a18" />
<filter id="ds" x="-10%" y="-10%" width="120%" height="120%"><feGaussianBlur stdDeviation="1.3"/></filter>
<rect x="363.30" y="171.80" width="205.30" height="255.70" fill="#000" opacity="0.2" filter="url(#ds)"/>
<rect x="363.60" y="171.40" width="204.70" height="254.90" fill="#f0f0f0" stroke="#bcbcbc" stroke-width="0.5"/>
<rect x="363.80" y="171.60" width="204.30" height="15.20" fill="#ffffff" />
<rect x="367.60" y="176.40" width="3.80" height="5.20" fill="#f4f4f4" stroke="#a8a8a8" stroke-width="0.4"/>
<rect x="368.80" y="175.60" width="3.80" height="5.20" fill="#fbfbfb" stroke="#a8a8a8" stroke-width="0.4"/>
<path d="M558 176.6 L562.6 181.2 M562.6 176.6 L558 181.2" fill="none" stroke="#9a9a9a" stroke-width="0.5" />
<rect x="366.90" y="189.00" width="21.20" height="11.40" fill="#ffffff" stroke="#d9d9d9" stroke-width="0.4"/>
<rect x="366.90" y="200.00" width="196.40" height="205.30" fill="#ffffff" stroke="#dcdcdc" stroke-width="0.4"/>
<rect x="367.20" y="199.40" width="20.60" height="1.40" fill="#ffffff" />
<path d="M378.60 206.60 H388.20 L391.20 209.60 V224.00 H378.60 Z" fill="#f6f6f6" stroke="#b4b4b4" stroke-width="0.45" />
<path d="M377.00 208.00 H386.60 L389.60 211.00 V225.60 H377.00 Z" fill="#f6f6f6" stroke="#b4b4b4" stroke-width="0.45" />
<path d="M375.60 209.60 H385.00 L388.00 212.60 V227.00 H375.60 Z" fill="#f6f6f6" stroke="#b4b4b4" stroke-width="0.45" />
<line x1="373.80" y1="230.80" x2="555.80" y2="230.80" stroke="#a0a0a0" stroke-width="0.45" />
<line x1="373.80" y1="297.20" x2="555.80" y2="297.20" stroke="#a0a0a0" stroke-width="0.45" />
<rect x="416.20" y="306.10" width="6.20" height="6.20" fill="#ffffff" stroke="#555" stroke-width="0.45"/>
<rect x="416.20" y="320.50" width="6.20" height="6.20" fill="#ffffff" stroke="#555" stroke-width="0.45"/>
<rect x="514.60" y="303.40" width="42.40" height="12.00" fill="#e1e1e1" stroke="#adadad" stroke-width="0.45"/>
<rect x="429.20" y="409.80" width="42.50" height="12.40" fill="#e1e1e1" stroke="#adadad" stroke-width="0.45"/>
<rect x="475.40" y="409.80" width="42.60" height="12.40" fill="#e1e1e1" stroke="#adadad" stroke-width="0.45"/>
<rect x="522.20" y="409.80" width="42.10" height="12.40" fill="#cccccc" stroke="#bfbfbf" stroke-width="0.45"/>
<rect x="-10.00" y="481.20" width="820.00" height="28.80" fill="#0f0f10" />
<rect x="331.00" y="481.20" width="19.40" height="24.00" fill="#353c37" />
<rect x="331.00" y="481.20" width="5.60" height="2.60" fill="#3f7a44" />
<rect x="399.40" y="481.20" width="22.40" height="24.00" fill="#b6601e" />
<rect x="72.50" y="498.80" width="19.40" height="6.00" fill="#8cbfea" />
<rect x="143.40" y="498.80" width="18.80" height="6.00" fill="#8cbfea" />
<rect x="447.80" y="498.80" width="19.00" height="6.00" fill="#8cbfea" />
<rect x="471.60" y="498.80" width="19.00" height="6.00" fill="#8cbfea" />
<rect x="331.00" y="498.80" width="19.40" height="6.00" fill="#59c16a" />
<rect x="399.40" y="498.80" width="22.40" height="6.00" fill="#ee9a4c" />
<polygon points="7.10,487.60 10.50,487.10 10.50,490.30 7.10,490.30" fill="#ffffff" />
<polygon points="11.10,487.00 15.20,486.40 15.20,490.30 11.10,490.30" fill="#ffffff" />
<polygon points="7.10,490.90 10.50,490.90 10.50,494.10 7.10,493.60" fill="#ffffff" />
<polygon points="11.10,490.90 15.20,490.90 15.20,494.80 11.10,494.20" fill="#ffffff" />
<rect x="30.20" y="486.00" width="10.00" height="8.80" fill="#060606" stroke="#a8a8a8" stroke-width="0.7"/>
<rect x="30.60" y="486.40" width="9.20" height="1.30" fill="#5a5a5a" />
<line x1="31.60" y1="489.20" x2="34.40" y2="489.20" stroke="#cfcfcf" stroke-width="0.5" />
<rect x="55.34" y="486.00" width="7.60" height="6.00" fill="#dfe6ee" stroke="#8f99a6" stroke-width="0.5"/>
<rect x="52.54" y="488.80" width="7.40" height="5.00" fill="#c4ccd6" stroke="#7e8894" stroke-width="0.5"/>
<rect x="57.74" y="492.60" width="4.60" height="2.00" fill="#aeb6c0" />
<rect x="76.21" y="486.00" width="10.40" height="8.20" fill="#f5c94e" />
<rect x="76.21" y="488.20" width="10.40" height="6.00" fill="#fbe08a" />
<rect x="78.01" y="490.80" width="6.80" height="3.40" fill="#3f93dd" />
<rect x="99.68" y="485.80" width="10.40" height="9.40" rx="0.80" fill="#dbe4f0" />
<rect x="99.68" y="485.80" width="10.40" height="2.00" fill="#3d6fb6" />
<rect x="102.68" y="488.80" width="4.40" height="2.80" fill="#d83a3a" />
<rect x="100.68" y="492.80" width="8.40" height="1.40" fill="#4a6a9a" />
<radialGradient id="g360" cx="0.4" cy="0.35" r="0.8"><stop offset="0" stop-color="#8fe05a"/><stop offset="1" stop-color="#35a82c"/></radialGradient>
<circle cx="128.75" cy="490.40" r="5.60" fill="url(#g360)" />
<path d="M125.75 490.60 H131.95 A3.2 3.2 0 1 0 131.15 492.80" fill="none" stroke="#ffffff" stroke-width="1.3" />
<path d="M151.92 490.40 L147.24 487.70 A5.40 5.40 0 0 1 156.60 487.70 Z" fill="#e2453c" />
<path d="M151.92 490.40 L156.60 487.70 A5.40 5.40 0 0 1 151.92 495.80 Z" fill="#f6c21c" />
<path d="M151.92 490.40 L151.92 495.80 A5.40 5.40 0 0 1 147.24 487.70 Z" fill="#3aa757" />
<circle cx="151.92" cy="490.40" r="2.60" fill="#ffffff" />
<circle cx="151.92" cy="490.40" r="2.00" fill="#4a8af4" />
<rect x="169.49" y="485.00" width="12.40" height="11.00" rx="1.80" fill="#f07a1a" />
<circle cx="175.69" cy="489.60" r="2.70" fill="none" stroke="#fff" stroke-width="0.9"/>
<circle cx="175.69" cy="487.00" r="0.90" fill="#fff" />
<circle cx="173.29" cy="491.00" r="0.90" fill="#fff" />
<circle cx="178.09" cy="491.00" r="0.90" fill="#fff" />
<rect x="172.49" y="493.60" width="6.40" height="1.00" fill="#fbd0a0" />
<rect x="193.56" y="485.20" width="11.40" height="10.80" rx="2.20" fill="#ffffff" />
<path d="M196.06 493.00 a2.2 2.2 0 0 1 0.6 -4.2 a3 3 0 0 1 5.6 -0.6 a2.4 2.4 0 0 1 0.4 4.8 Z" fill="none" stroke="#2f7cf6" stroke-width="1.1" />
<path d="M196.06 493.00 h3" fill="none" stroke="#27c08a" stroke-width="1.1" />
<rect x="217.03" y="485.20" width="11.60" height="10.80" rx="2.20" fill="#ffffff" />
<circle cx="222.83" cy="488.80" r="2.10" fill="none" stroke="#2f7cf6" stroke-width="1.0"/>
<circle cx="220.93" cy="491.90" r="1.90" fill="none" stroke="#e8536c" stroke-width="0.9"/>
<circle cx="224.73" cy="491.90" r="1.90" fill="none" stroke="#5a8af6" stroke-width="0.9"/>
<rect x="240.60" y="486.60" width="11.00" height="8.20" fill="#f3efe9" />
<rect x="245.80" y="487.80" width="4.60" height="6.00" fill="#ef8a2c" />
<rect x="242.20" y="490.00" width="2.40" height="3.80" fill="#f2a65a" />
<rect x="247.20" y="489.00" width="1.00" height="3.60" fill="#fff2e0" />
<path d="M273.37 487.40 A4.6 4.6 0 1 0 273.37 493.40" fill="none" stroke="#11719f" stroke-width="1.1" stroke-dasharray="2.6 0.7"/>
<rect x="287.64" y="485.00" width="11.20" height="11.00" fill="#2b2416" />
<rect x="288.84" y="486.20" width="8.80" height="8.60" fill="#5d4d28" />
<polygon points="293.24,486.60 296.64,490.40 293.24,494.20 289.84,490.40" fill="#a58c48" />
<circle cx="293.24" cy="490.00" r="1.40" fill="#d8c07a" />
<rect x="288.84" y="493.00" width="8.80" height="1.80" fill="#3a3018" />
<rect x="334.28" y="484.70" width="11.80" height="11.30" rx="1.20" fill="#3d86e8" />
<polygon points="336.38,493.80 339.38,489.60 336.58,487.60 340.78,488.20 343.98,486.40 342.98,491.20 339.98,492.60" fill="#ffffff" />
<circle cx="363.00" cy="490.40" r="5.20" fill="#c02438" />
<circle cx="363.00" cy="490.40" r="3.10" fill="none" stroke="#7a1422" stroke-width="1.3"/>
<circle cx="363.00" cy="490.40" r="1.10" fill="#7a1422" />
<circle cx="363.00" cy="490.40" r="5.20" fill="none" stroke="#8a1826" stroke-width="0.7"/>
<circle cx="386.60" cy="490.40" r="5.20" fill="#c02438" />
<circle cx="386.60" cy="490.40" r="3.10" fill="none" stroke="#7a1422" stroke-width="1.3"/>
<circle cx="386.60" cy="490.40" r="1.10" fill="#7a1422" />
<circle cx="386.60" cy="490.40" r="5.20" fill="none" stroke="#8a1826" stroke-width="0.7"/>
<rect x="405.19" y="485.40" width="10.00" height="10.20" rx="1.20" fill="#6a5a50" />
<rect x="406.59" y="486.40" width="3.00" height="3.40" fill="#e8e0d8" />
<rect x="410.59" y="486.40" width="3.00" height="3.40" fill="#3a3a4a" />
<rect x="406.59" y="490.80" width="7.20" height="3.80" fill="#d8d0c8" />
<circle cx="411.79" cy="492.80" r="1.60" fill="#4a4a5a" />
<path d="M430.66 485.80 H435.46 L437.66 488.00 V495.00 H430.66 Z" fill="#ffffff" />
<rect x="452.13" y="486.00" width="10.80" height="8.60" fill="#1a1f12" />
<path d="M453.33 490.40 C455.53 487.00 459.53 487.00 461.73 489.40 C459.53 493.80 455.53 493.80 453.33 490.40 Z" fill="#76b900" />
<circle cx="457.13" cy="490.20" r="1.30" fill="#1a1f12" />
<line x1="482.80" y1="490.40" x2="484.80" y2="490.40" stroke="#ffffff" stroke-width="1.5" />
<line x1="482.10" y1="492.10" x2="483.51" y2="493.51" stroke="#ffffff" stroke-width="1.5" />
<line x1="480.40" y1="492.80" x2="480.40" y2="494.80" stroke="#ffffff" stroke-width="1.5" />
<line x1="478.70" y1="492.10" x2="477.29" y2="493.51" stroke="#ffffff" stroke-width="1.5" />
<line x1="478.00" y1="490.40" x2="476.00" y2="490.40" stroke="#ffffff" stroke-width="1.5" />
<line x1="478.70" y1="488.70" x2="477.29" y2="487.29" stroke="#ffffff" stroke-width="1.5" />
<line x1="480.40" y1="488.00" x2="480.40" y2="486.00" stroke="#ffffff" stroke-width="1.5" />
<line x1="482.10" y1="488.70" x2="483.51" y2="487.29" stroke="#ffffff" stroke-width="1.5" />
<circle cx="480.40" cy="490.40" r="2.70" fill="none" stroke="#fff" stroke-width="1.5"/>
<line x1="797.30" y1="481.20" x2="797.30" y2="505.00" stroke="#555555" stroke-width="0.5" />
<path d="M666.6 491.6 L668.8 489.4 L671 491.6" fill="none" stroke="#fff" stroke-width="0.6" />
<rect x="676.40" y="488.40" width="7.00" height="4.00" fill="#e8e8e8" />
<rect x="677.60" y="489.40" width="3.20" height="1.40" fill="#0f0f10" />
<polygon points="687.20,489.40 688.80,489.40 690.80,487.60 690.80,493.20 688.80,491.40 687.20,491.40" fill="none" stroke="#9a9a9a" stroke-width="0.5"/>
<path d="M692.4 488.8 Q693.6 490.4 692.4 492" fill="none" stroke="#9a9a9a" stroke-width="0.5" />
<rect x="711.80" y="487.10" width="7.40" height="7.40" rx="1.20" fill="#ea5220" />
<circle cx="731.40" cy="490.30" r="5.30" fill="#2ebd6a" />
<circle cx="731.40" cy="490.30" r="3.70" fill="#1f7a46" />
<circle cx="731.40" cy="490.30" r="3.70" fill="none" stroke="#d8ffe6" stroke-width="0.5"/>
<path d="M781 486.8 H788.2 V492.2 H785.6 L784.6 493.6 L783.6 492.2 H781 Z" fill="#ffffff" />
<line x1="782.40" y1="488.60" x2="786.80" y2="488.60" stroke="#0f0f10" stroke-width="0.5" />
<line x1="782.40" y1="490.20" x2="786.80" y2="490.20" stroke="#0f0f10" stroke-width="0.5" />
</svg>
<div class="t" style="top:3.42px;font-size:11.4px;line-height:15.96px;color:#9a9a9a;left:91.6px;"><span class="l">D:\PIKPAK\nvile-</span><span class="k">大集合</span></div>
<div class="t" style="top:24.22px;font-size:11.4px;line-height:15.96px;color:#ffffff;left:26.4px;transform:translateX(-50%);"><span class="k">文件</span></div>
<div class="t" style="top:24.22px;font-size:11.4px;line-height:15.96px;color:#222;left:77px;transform:translateX(-50%);"><span class="k">主页</span></div>
<div class="t" style="top:24.22px;font-size:11.4px;line-height:15.96px;color:#222;left:124.6px;transform:translateX(-50%);"><span class="k">共享</span></div>
<div class="t" style="top:24.22px;font-size:11.4px;line-height:15.96px;color:#222;left:173px;transform:translateX(-50%);"><span class="k">查看</span></div>
<div class="t" style="top:25.72px;font-size:10.4px;line-height:14.56px;color:#fff;left:1590px;transform:translateX(-50%);font-weight:bold;"><span class="l">?</span></div>
<div class="t" style="top:120.42px;font-size:11.4px;line-height:15.96px;color:#6d6d6d;left:114px;transform:translateX(-50%);"><span class="k">剪贴板</span></div>
<div class="t" style="top:120.42px;font-size:11.4px;line-height:15.96px;color:#6d6d6d;left:313px;transform:translateX(-50%);"><span class="k">组织</span></div>
<div class="t" style="top:120.42px;font-size:11.4px;line-height:15.96px;color:#6d6d6d;left:461px;transform:translateX(-50%);"><span class="k">新建</span></div>
<div class="t" style="top:120.42px;font-size:11.4px;line-height:15.96px;color:#6d6d6d;left:581px;transform:translateX(-50%);"><span class="k">打开</span></div>
<div class="t" style="top:120.42px;font-size:11.4px;line-height:15.96px;color:#6d6d6d;left:679px;transform:translateX(-50%);"><span class="k">选择</span></div>
<div class="t" style="top:84.62px;font-size:11.4px;line-height:15.96px;color:#2e2e2e;left:30.4px;transform:translateX(-50%);"><span class="k">固定到快</span></div>
<div class="t" style="top:98.42px;font-size:11.4px;line-height:15.96px;color:#2e2e2e;left:30.4px;transform:translateX(-50%);"><span class="k">速访问</span></div>
<div class="t" style="top:84.62px;font-size:11.4px;line-height:15.96px;color:#2e2e2e;left:72.4px;transform:translateX(-50%);"><span class="k">复制</span></div>
<div class="t" style="top:84.62px;font-size:11.4px;line-height:15.96px;color:#9a9a9a;left:112.6px;transform:translateX(-50%);"><span class="k">粘贴</span></div>
<div class="t" style="top:50.42px;font-size:11.4px;line-height:15.96px;color:#2e2e2e;left:152.4px;"><span class="k">剪切</span></div>
<div class="t" style="top:70.62px;font-size:11.4px;line-height:15.96px;color:#2e2e2e;left:152.4px;"><span class="k">复制路径</span></div>
<div class="t" style="top:90.82px;font-size:11.4px;line-height:15.96px;color:#9a9a9a;left:152.4px;"><span class="k">粘贴快捷方式</span></div>
<div class="t" style="top:84.62px;font-size:11.4px;line-height:15.96px;color:#2e2e2e;left:251.6px;transform:translateX(-50%);"><span class="k">移动到</span></div>
<div class="t" style="top:84.62px;font-size:11.4px;line-height:15.96px;color:#2e2e2e;left:290.6px;transform:translateX(-50%);"><span class="k">复制到</span></div>
<div class="t" style="top:84.62px;font-size:11.4px;line-height:15.96px;color:#2e2e2e;left:336.4px;transform:translateX(-50%);"><span class="k">删除</span></div>
<div class="t" style="top:84.62px;font-size:11.4px;line-height:15.96px;color:#2e2e2e;left:374.8px;transform:translateX(-50%);"><span class="k">重命名</span></div>
<div class="t" style="top:84.62px;font-size:11.4px;line-height:15.96px;color:#2e2e2e;left:422.4px;transform:translateX(-50%);"><span class="k">新建</span></div>
<div class="t" style="top:98.42px;font-size:11.4px;line-height:15.96px;color:#2e2e2e;left:422.4px;transform:translateX(-50%);"><span class="k">文件夹</span></div>
<div class="t" style="top:51.02px;font-size:11.4px;line-height:15.96px;color:#2e2e2e;left:462.8px;"><span class="k">新建项目</span></div>
<div class="t" style="top:70.62px;font-size:11.4px;line-height:15.96px;color:#2e2e2e;left:462.8px;"><span class="k">轻松访问</span></div>
<div class="t" style="top:83.82px;font-size:11.4px;line-height:15.96px;color:#2e2e2e;left:547px;transform:translateX(-50%);"><span class="k">属性</span></div>
<div class="t" style="top:52.22px;font-size:11.4px;line-height:15.96px;color:#2e2e2e;left:586.4px;"><span class="k">打开</span></div>
<div class="t" style="top:74.62px;font-size:11.4px;line-height:15.96px;color:#9a9a9a;left:586.4px;"><span class="k">编辑</span></div>
<div class="t" style="top:96.62px;font-size:11.4px;line-height:15.96px;color:#9a9a9a;left:586.4px;"><span class="k">历史记录</span></div>
<div class="t" style="top:51.22px;font-size:11.4px;line-height:15.96px;color:#2e2e2e;left:664.4px;"><span class="k">全部选择</span></div>
<div class="t" style="top:71.22px;font-size:11.4px;line-height:15.96px;color:#2e2e2e;left:664.4px;"><span class="k">全部取消</span></div>
<div class="t" style="top:91.22px;font-size:11.4px;line-height:15.96px;color:#2e2e2e;left:664.4px;"><span class="k">反向选择</span></div>
<div class="t" style="top:146.02px;font-size:11.4px;line-height:15.96px;color:#222;left:133.2px;"><span class="k">此电脑</span></div>
<div class="t" style="top:146.02px;font-size:11.4px;line-height:15.96px;color:#222;left:186.4px;"><span class="k">软件</span><span class="l"> (D:)</span></div>
<div class="t" style="top:146.02px;font-size:11.4px;line-height:15.96px;color:#222;left:250px;"><span class="l">PIKPAK</span></div>
<div class="t" style="top:146.02px;font-size:11.4px;line-height:15.96px;color:#222;left:309.2px;"><span class="l">nvile-</span><span class="k">大集合</span></div>
<div class="t" style="top:146.02px;font-size:11.4px;line-height:15.96px;color:#6d6d6d;left:1428.4px;"><span class="k">在</span><span class="l"> nvile-</span><span class="k">大集合</span> <span class="k">中搜索</span></div>
<div class="t" style="top:188.82px;font-size:11.4px;line-height:15.96px;color:#222;left:40.6px;max-width:102.6px;overflow:hidden;"><span class="k">快速访问</span></div>
<div class="t" style="top:211.62px;font-size:11.4px;line-height:15.96px;color:#222;left:47.8px;max-width:95.4px;overflow:hidden;"><span class="k">桌面</span></div>
<div class="t" style="top:234.42px;font-size:11.4px;line-height:15.96px;color:#222;left:47.8px;max-width:95.4px;overflow:hidden;"><span class="k">下载</span></div>
<div class="t" style="top:257.22px;font-size:11.4px;line-height:15.96px;color:#222;left:47.8px;max-width:95.4px;overflow:hidden;"><span class="k">图片</span></div>
<div class="t" style="top:280.02px;font-size:11.4px;line-height:15.96px;color:#222;left:47.8px;max-width:95.4px;overflow:hidden;"><span class="k">文档</span></div>
<div class="t" style="top:302.42px;font-size:11.4px;line-height:15.96px;color:#222;left:47.8px;max-width:95.4px;overflow:hidden;"><span class="k">软件</span><span class="l"> (D:)</span></div>
<div class="t" style="top:325.22px;font-size:11.4px;line-height:15.96px;color:#222;left:47.8px;max-width:95.4px;overflow:hidden;"><span class="k">新加卷</span><span class="l"> (E:)</span></div>
<div class="t" style="top:348.02px;font-size:11.4px;line-height:15.96px;color:#222;left:47.8px;max-width:95.4px;overflow:hidden;"><span class="l">Win10ProW X(</span></div>
<div class="t" style="top:376.02px;font-size:11.4px;line-height:15.96px;color:#222;left:40.6px;max-width:102.6px;overflow:hidden;"><span class="l">MEGA</span></div>
<div class="t" style="top:406.42px;font-size:11.4px;line-height:15.96px;color:#222;left:40.6px;max-width:102.6px;overflow:hidden;"><span class="k">此电脑</span></div>
<div class="t" style="top:429.22px;font-size:11.4px;line-height:15.96px;color:#222;left:47.8px;max-width:95.4px;overflow:hidden;"><span class="k">视频</span></div>
<div class="t" style="top:452.02px;font-size:11.4px;line-height:15.96px;color:#222;left:47.8px;max-width:95.4px;overflow:hidden;"><span class="k">图片</span></div>
<div class="t" style="top:474.42px;font-size:11.4px;line-height:15.96px;color:#222;left:47.8px;max-width:95.4px;overflow:hidden;"><span class="k">文档</span></div>
<div class="t" style="top:497.22px;font-size:11.4px;line-height:15.96px;color:#222;left:47.8px;max-width:95.4px;overflow:hidden;"><span class="k">下载</span></div>
<div class="t" style="top:520.02px;font-size:11.4px;line-height:15.96px;color:#222;left:47.8px;max-width:95.4px;overflow:hidden;"><span class="k">音乐</span></div>
<div class="t" style="top:542.42px;font-size:11.4px;line-height:15.96px;color:#222;left:47.8px;max-width:95.4px;overflow:hidden;"><span class="k">桌面</span></div>
<div class="t" style="top:564.82px;font-size:11.4px;line-height:15.96px;color:#222;left:47.8px;max-width:95.4px;overflow:hidden;"><span class="l">Win10ProW X64 (</span></div>
<div class="t" style="top:587.62px;font-size:11.4px;line-height:15.96px;color:#222;left:47.8px;max-width:95.4px;overflow:hidden;"><span class="k">软件</span><span class="l"> (D:)</span></div>
<div class="t" style="top:610.02px;font-size:11.4px;line-height:15.96px;color:#222;left:47.8px;max-width:95.4px;overflow:hidden;"><span class="k">新加卷</span><span class="l"> (E:)</span></div>
<div class="t" style="top:639.22px;font-size:11.4px;line-height:15.96px;color:#222;left:40.6px;max-width:102.6px;overflow:hidden;"><span class="k">网络</span></div>
<div class="t" style="top:943.22px;font-size:11.4px;line-height:15.96px;color:#42536c;left:14.4px;"><span class="l">16 </span><span class="k">个项目</span></div>
<div class="t" style="top:943.22px;font-size:11.4px;line-height:15.96px;color:#42536c;left:86px;"><span class="k">已选择</span><span class="l"> 16 </span><span class="k">个项目</span></div>
<div class="t" style="top:268.02px;font-size:11.4px;line-height:15.96px;color:#222;left:209.1px;transform:translateX(-50%);"><span class="l">1</span></div>
<div class="t" style="top:268.02px;font-size:11.4px;line-height:15.96px;color:#222;left:311.58px;transform:translateX(-50%);"><span class="l">7</span><span class="k">月</span></div>
<div class="t" style="top:268.02px;font-size:11.4px;line-height:15.96px;color:#222;left:414.06px;transform:translateX(-50%);"><span class="l">12.31</span></div>
<div class="t" style="top:268.02px;font-size:11.4px;line-height:15.96px;color:#222;left:516.54px;transform:translateX(-50%);"><span class="l">JC</span></div>
<div class="t" style="top:268.02px;font-size:11.4px;line-height:15.96px;color:#222;left:619.02px;transform:translateX(-50%);"><span class="l">suixin</span></div>
<div class="t" style="top:268.02px;font-size:11.4px;line-height:15.96px;color:#222;left:721.5px;transform:translateX(-50%);"><span class="k">视频</span><span class="l">-</span><span class="k">炮灰</span></div>
<div class="t" style="top:268.02px;font-size:11.4px;line-height:15.96px;color:#222;left:823.98px;transform:translateX(-50%);"><span class="k">文</span><span class="l">file</span><span class="k">件</span></div>
<div class="t" style="top:268.02px;font-size:11.4px;line-height:15.96px;color:#222;left:926.46px;transform:translateX(-50%);"><span class="k">小片段</span></div>
<div class="t" style="top:268.02px;font-size:11.4px;line-height:15.96px;color:#222;left:1028.94px;transform:translateX(-50%);"><span class="l">20200701_093</span></div>
<div class="t" style="top:283.22px;font-size:11.4px;line-height:15.96px;color:#222;left:1028.94px;transform:translateX(-50%);"><span class="l">232_10128.jpg</span></div>
<div class="t" style="top:268.02px;font-size:11.4px;line-height:15.96px;color:#222;left:1131.42px;transform:translateX(-50%);"><span class="l">FALL FROM</span></div>
<div class="t" style="top:283.22px;font-size:11.4px;line-height:15.96px;color:#222;left:1131.42px;transform:translateX(-50%);"><span class="l">GRACE(</span><span class="k">字幕版</span><span class="l">)</span></div>
<div class="t" style="top:298.42px;font-size:11.4px;line-height:15.96px;color:#222;left:1131.42px;transform:translateX(-50%);"><span class="l">.mp4</span></div>
<div class="t" style="top:268.02px;font-size:11.4px;line-height:15.96px;color:#222;left:1233.9px;transform:translateX(-50%);"><span class="l">Screenshot_202</span></div>
<div class="t" style="top:283.22px;font-size:11.4px;line-height:15.96px;color:#222;left:1233.9px;transform:translateX(-50%);"><span class="l">2_0811_210605</span></div>
<div class="t" style="top:298.42px;font-size:11.4px;line-height:15.96px;color:#222;left:1233.9px;transform:translateX(-50%);"><span class="l">.jpg</span></div>
<div class="t" style="top:268.02px;font-size:11.4px;line-height:15.96px;color:#222;left:1336.38px;transform:translateX(-50%);"><span class="l">Screenshot_202</span></div>
<div class="t" style="top:283.22px;font-size:11.4px;line-height:15.96px;color:#222;left:1336.38px;transform:translateX(-50%);"><span class="l">2_0811_210621</span></div>
<div class="t" style="top:298.42px;font-size:11.4px;line-height:15.96px;color:#222;left:1336.38px;transform:translateX(-50%);"><span class="l">.jpg</span></div>
<div class="t" style="top:268.02px;font-size:11.4px;line-height:15.96px;color:#222;left:1438.86px;transform:translateX(-50%);"><span class="l">Teşkilat </span><span class="k">公司</span></div>
<div class="t" style="top:283.22px;font-size:11.4px;line-height:15.96px;color:#222;left:1438.86px;transform:translateX(-50%);"><span class="l">Zehra </span><span class="k">剪辑（中</span></div>
<div class="t" style="top:298.42px;font-size:11.4px;line-height:15.96px;color:#222;left:1438.86px;transform:translateX(-50%);"><span class="k">文字幕版）（土</span></div>
<div class="t" style="top:313.62px;font-size:11.4px;line-height:15.96px;color:#222;left:1438.86px;transform:translateX(-50%);"><span class="k">耳其）</span><span class="l">Compr...</span></div>
<div class="t" style="top:268.02px;font-size:11.4px;line-height:15.96px;color:#222;left:1541.34px;transform:translateX(-50%);"><span class="k">爱心</span> <span class="k">慕新月</span><span class="l"> &amp;</span></div>
<div class="t" style="top:283.22px;font-size:11.4px;line-height:15.96px;color:#222;left:1541.34px;transform:translateX(-50%);"><span class="k">严雨墨</span> <span class="k">剪辑</span></div>
<div class="t" style="top:298.42px;font-size:11.4px;line-height:15.96px;color:#222;left:1541.34px;transform:translateX(-50%);"><span class="l">.mp4</span></div>
<div class="t" style="top:386.62px;font-size:11.4px;line-height:15.96px;color:#222;left:209.1px;transform:translateX(-50%);"><span class="k">美丽脂扣</span> <span class="k">采芝</span> <span class="k">旗</span></div>
<div class="t" style="top:401.82px;font-size:11.4px;line-height:15.96px;color:#222;left:209.1px;transform:translateX(-50%);"><span class="k">袍女忍刑讯</span><span class="l">.mp4</span></div>
<div class="t" style="top:386.62px;font-size:11.4px;line-height:15.96px;color:#222;left:311.58px;transform:translateX(-50%);"><span class="k">拌氧</span><span class="l">.mp4</span></div>
<div class="t" style="top:350.42px;font-size:11.4px;line-height:15.96px;color:#9a9a9a;left:752px;"><span class="l">1, ... </span><span class="k">属性</span></div>
<div class="t" style="top:382.22px;font-size:11.4px;line-height:15.96px;color:#111;left:751.2px;transform:translateX(-50%);"><span class="k">常规</span></div>
<div class="t" style="top:382.82px;font-size:11.4px;line-height:15.96px;color:#111;left:797.2px;transform:translateX(-50%);"><span class="k">自定义</span></div>
<div class="t" style="top:420.82px;font-size:11.4px;line-height:15.96px;color:#111;left:833.2px;"><span class="l">1,351 </span><span class="k">个文件，</span><span class="l">22 </span><span class="k">个文件夹</span></div>
<div class="t" style="top:474.42px;font-size:11.4px;line-height:15.96px;color:#111;left:747.6px;"><span class="k">类型</span><span class="l">:</span></div>
<div class="t" style="top:474.42px;font-size:11.4px;line-height:15.96px;color:#111;left:833.2px;"><span class="k">多种类型</span></div>
<div class="t" style="top:504.62px;font-size:11.4px;line-height:15.96px;color:#111;left:747.6px;"><span class="k">位置</span><span class="l">:</span></div>
<div class="t" style="top:504.62px;font-size:11.4px;line-height:15.96px;color:#111;left:833.2px;"><span class="k">全部位于</span><span class="l"> D:\PIKPAK\nvile-</span><span class="k">大集合</span></div>
<div class="t" style="top:535.02px;font-size:11.4px;line-height:15.96px;color:#111;left:747.6px;"><span class="k">大小</span><span class="l">:</span></div>
<div class="t" style="top:535.02px;font-size:11.4px;line-height:15.96px;color:#111;left:833.2px;"><span class="l">145 GB (156,664,717,850 </span><span class="k">字节</span><span class="l">)</span></div>
<div class="t" style="top:565.42px;font-size:11.4px;line-height:15.96px;color:#111;left:747.6px;"><span class="k">占用空间</span><span class="l">:</span></div>
<div class="t" style="top:565.42px;font-size:11.4px;line-height:15.96px;color:#111;left:833.2px;"><span class="l">145 GB (156,667,408,384 </span><span class="k">字节</span><span class="l">)</span></div>
<div class="t" style="top:610.42px;font-size:11.4px;line-height:15.96px;color:#111;left:747.6px;"><span class="k">属性</span><span class="l">:</span></div>
<div class="t" style="top:610.42px;font-size:11.4px;line-height:15.96px;color:#111;left:848.8px;"><span class="k">只读</span><span class="l">(R)</span></div>
<div class="t" style="top:639.22px;font-size:11.4px;line-height:15.96px;color:#111;left:848.8px;"><span class="k">隐藏</span><span class="l">(H)</span></div>
<div class="t" style="top:611.02px;font-size:11.4px;line-height:15.96px;color:#111;left:1071.6px;transform:translateX(-50%);"><span class="k">高级</span><span class="l">(D)...</span></div>
<div class="t" style="top:824.22px;font-size:11.4px;line-height:15.96px;color:#111;left:900.9px;transform:translateX(-50%);"><span class="k">确定</span></div>
<div class="t" style="top:824.22px;font-size:11.4px;line-height:15.96px;color:#111;left:993.4px;transform:translateX(-50%);"><span class="k">取消</span></div>
<div class="t" style="top:824.22px;font-size:11.4px;line-height:15.96px;color:#8a8a8a;left:1086.5px;transform:translateX(-50%);"><span class="k">应用</span><span class="l">(A)</span></div>
<div class="t" style="top:965.22px;font-size:11.4px;line-height:15.96px;color:#fff;left:1295px;transform:translateX(-50%);"><span class="l">5%</span></div>
<div class="t" style="top:980.42px;font-size:11.4px;line-height:15.96px;color:#fff;left:1295px;transform:translateX(-50%);"><span class="l">CPU</span><span class="k">利用率</span></div>
<div class="t" style="top:969.92px;font-size:16.4px;line-height:22.96px;color:#fff;left:1404.4px;transform:translateX(-50%);"><span class="l">A</span></div>
<div class="t" style="top:972.36px;font-size:13.2px;line-height:18.48px;color:#fff;left:1431px;transform:translateX(-50%);font-weight:bold;"><span class="l">S</span></div>
<div class="t" style="top:974.64px;font-size:8.8px;line-height:12.32px;color:#fff;left:1462.8px;transform:translateX(-50%);"><span class="l">20</span></div>
<div class="t" style="top:965.22px;font-size:11.4px;line-height:15.96px;color:#fff;left:1514px;transform:translateX(-50%);"><span class="l">17:28 </span><span class="k">周三</span></div>
<div class="t" style="top:980.62px;font-size:11.4px;line-height:15.96px;color:#fff;left:1514px;transform:translateX(-50%);letter-spacing:0.5px;"><span class="l">2026/3/25</span></div>
<div class="t" style="top:973.8px;font-size:10px;line-height:14px;color:#000;left:632.22px;transform:translateX(-50%);font-weight:bold;letter-spacing:-0.2px;"><span style="color:#e8452c">17</span><span style="color:#3f9be8">yy</span></div>
</div></div></div></body></html>
